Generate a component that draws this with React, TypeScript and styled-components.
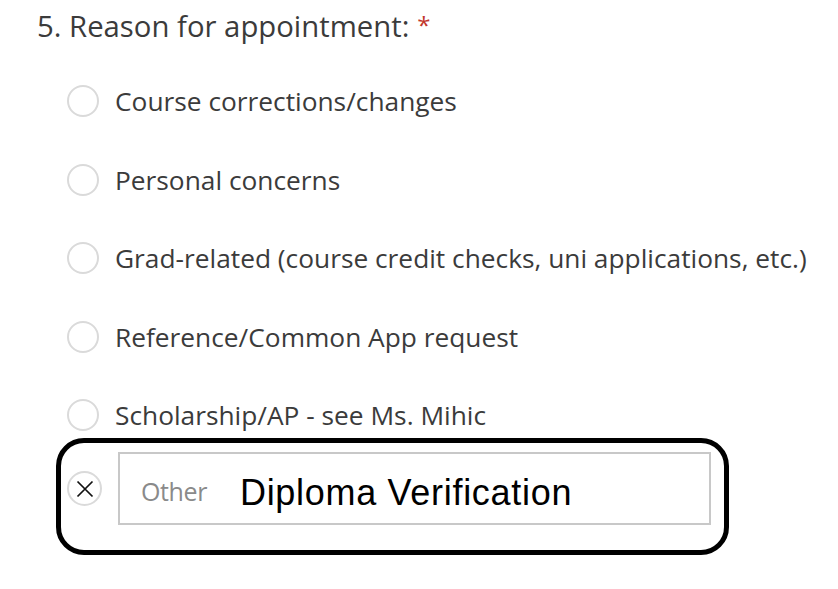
import React from "react";
import styled, { createGlobalStyle } from "styled-components";

const Global = createGlobalStyle`
  html, body { margin: 0; padding: 0; background: #fff; }
  body { width: 838px; height: 589px; overflow: hidden; }
`;

const Page = styled.div`
  padding: 5px 0 0 37px;
  font-family: "Open Sans", "Noto Sans", sans-serif;
  color: #3b3b3b;
`;

const Question = styled.div`
  font-size: 29.3px;
  line-height: 40px;
`;

const Required = styled.span`
  color: #c2372d;
  font-size: 24px;
  vertical-align: 3px;
  margin-left: 8px;
`;

const Options = styled.div`
  display: flex;
  flex-direction: column;
  gap: 38.5px;
  margin-top: 35px;
  padding-left: 30px;
`;

const Option = styled.label`
  display: flex;
  align-items: center;
  gap: 16px;
  height: 40px;
  font-size: 26.3px;
`;

const Radio = styled.span<{ $size?: number }>`
  flex: none;
  width: ${(p) => p.$size ?? 32}px;
  height: ${(p) => p.$size ?? 32}px;
  box-sizing: border-box;
  border-radius: 50%;
  border: 2px solid #dadada;
  display: flex;
  align-items: center;
  justify-content: center;
`;

const Highlight = styled.div`
  margin: 3px 0 0 19px;
  width: 673px;
  height: 117px;
  box-sizing: border-box;
  border: 5px solid #000;
  border-radius: 28px;
  padding: 9px 0 0 6px;
`;

const OtherRow = styled.div`
  display: flex;
  align-items: center;
  gap: 16px;
`;

const OtherBox = styled.div`
  width: 593px;
  height: 73px;
  box-sizing: border-box;
  border: 2px solid #c8c8c8;
  display: flex;
  align-items: center;
  padding: 4px 0 0 21px;
  gap: 33px;
`;

const Placeholder = styled.span`
  font-size: 25px;
  color: #8a8a8a;
  letter-spacing: -0.4px;
`;

const Answer = styled.span`
  font-family: "Liberation Sans", Arial, sans-serif;
  font-size: 36px;
  letter-spacing: 0.7px;
  color: #000;
  padding-top: 4px;
`;

const options = [
  "Course corrections/changes",
  "Personal concerns",
  "Grad-related (course credit checks, uni applications, etc.)",
  "Reference/Common App request",
  "Scholarship/AP - see Ms. Mihic",
];

export default function App() {
  return (
    <>
      <Global />
      <Page>
        <Question>
          5. Reason for appointment:<Required>*</Required>
        </Question>
        <Options>
          {options.map((o) => (
            <Option key={o}>
              <Radio />
              {o}
            </Option>
          ))}
        </Options>
        <Highlight>
          <OtherRow>
            <Radio $size={35}>
              <svg width="18" height="18" viewBox="0 0 18 18">
                <path d="M1.5 1.5 L16.5 16.5 M16.5 1.5 L1.5 16.5" stroke="#111" strokeWidth="1.7" />
              </svg>
            </Radio>
            <OtherBox>
              <Placeholder>Other</Placeholder>
              <Answer>Diploma Verification</Answer>
            </OtherBox>
          </OtherRow>
        </Highlight>
      </Page>
    </>
  );
}
